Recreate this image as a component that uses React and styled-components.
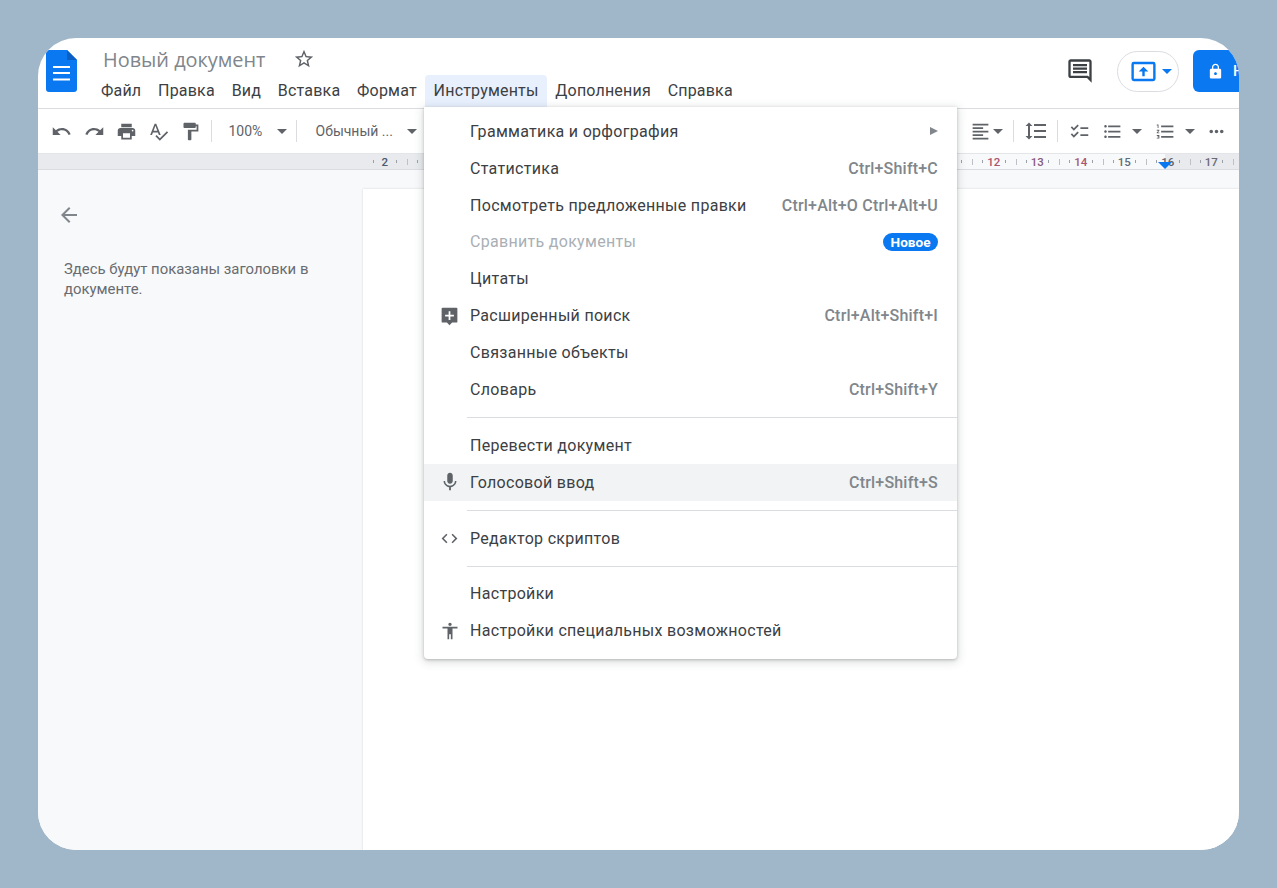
import React from 'react';
import styled, { createGlobalStyle } from 'styled-components';

const GlobalStyle = createGlobalStyle`
  html, body {
    margin: 0;
    padding: 0;
    background: #a0b7c9;
  }
  * {
    box-sizing: border-box;
  }
`;

const Stage = styled.div`
  width: 1277px;
  height: 888px;
  padding: 38px;
  background: #a0b7c9;
  font-family: Roboto, "Liberation Sans", sans-serif;
`;

const Frame = styled.div`
  position: relative;
  width: 1201px;
  height: 812px;
  display: flex;
  flex-direction: column;
  background: #fff;
  border-radius: 38px;
  overflow: hidden;
`;

const Header = styled.header`
  flex: none;
  height: 71px;
  display: flex;
  align-items: flex-start;
  border-bottom: 1px solid #dadce0;
  padding-left: 8px;
`;

const DocLogo = styled.svg`
  flex: none;
  width: 31px;
  height: 42px;
  margin-top: 12px;
`;

const TitleColumn = styled.div`
  margin-left: 24px;
  display: flex;
  flex-direction: column;
`;

const TitleRow = styled.div`
  display: flex;
  align-items: center;
  height: 24px;
  margin-top: 9px;
  margin-left: 2px;
`;

const DocTitle = styled.span`
  font-family: "Open Sans", Roboto, sans-serif;
  font-size: 19.9px;
  color: #80868b;
  width: 190px;
`;

const MenuBar = styled.nav`
  display: flex;
  margin-top: 4px;
`;

const MenuTab = styled.span`
  height: 32px;
  display: flex;
  align-items: center;
  padding: 0 8.4px 2px;
  font-size: 16px;
  letter-spacing: 0.19px;
  color: #3c4043;
  background: ${(p) => (p.$active ? '#e8f0fe' : 'transparent')};
  border-radius: 4px 4px 0 0;
  &:first-child {
    padding-left: 0;
  }
`;

const HeaderActions = styled.div`
  margin-left: auto;
  display: flex;
  align-items: center;
  height: 42px;
  margin-top: 12px;
`;

const ShareMove = styled.div`
  width: 62px;
  height: 41px;
  margin-left: 23px;
  border: 1px solid #dadce0;
  border-radius: 21px;
  display: flex;
  align-items: center;
  padding-left: 11px;
  gap: 4px;
`;

const Caret = styled.i`
  display: block;
  flex: none;
  width: 0;
  height: 0;
  margin-left: ${(p) => p.$gap || 0}px;
  border-left: 5px solid transparent;
  border-right: 5px solid transparent;
  border-top: 5px solid ${(p) => p.$color || '#5f6368'};
`;

const ShareButton = styled.div`
  width: 46px;
  height: 42px;
  margin-left: 14px;
  background: #0a78f0;
  border-radius: 6px 0 0 6px;
  display: flex;
  align-items: center;
  padding-left: 14px;
  gap: 9px;
  color: #fff;
  font-size: 15px;
  font-weight: 500;
  overflow: hidden;
`;

const Toolbar = styled.div`
  flex: none;
  height: 44px;
  display: flex;
  align-items: center;
  padding-left: 12.5px;
  padding-right: 12px;
`;

const ToolIcon = styled.svg`
  display: block;
  flex: none;
  width: ${(p) => p.$size || 21}px;
  height: ${(p) => p.$size || 21}px;
  fill: ${(p) => p.$color || '#5f6368'};
  margin-left: ${(p) => p.$gap || 0}px;
`;

const ToolDivider = styled.span`
  flex: none;
  width: 1px;
  height: 22px;
  background: #dadce0;
  margin: 0 ${(p) => p.$right ?? 10}px 0 ${(p) => p.$left ?? 10}px;
`;

const ToolText = styled.span`
  font-size: 14px;
  color: #5f6368;
  width: ${(p) => p.$width}px;
  white-space: nowrap;
`;

const ToolGroupRight = styled.div`
  margin-left: auto;
  display: flex;
  align-items: center;
`;

const Ruler = styled.div`
  flex: none;
  height: 17px;
  display: flex;
  align-items: center;
  padding-left: 325px;
  background: linear-gradient(
    to right,
    #e8eaed 0,
    #e8eaed 390px,
    #f8f9fa 390px,
    #f8f9fa 1127px,
    #e8eaed 1127px
  );
  border-top: 1px solid #e3e5e8;
  border-bottom: 1px solid #dadce0;
  overflow: hidden;
`;

const RulerCell = styled.span`
  position: relative;
  flex: none;
  width: 43.5px;
  height: 12px;
  line-height: 12px;
  text-align: center;
  font-size: 11.5px;
  font-weight: 500;
  color: ${(p) => p.$color || '#5f6368'};
  background:
    linear-gradient(#9aa0a6, #9aa0a6) 10px 50% / 1px 3px no-repeat,
    linear-gradient(#9aa0a6, #9aa0a6) calc(100% - 10px) 50% / 1px 3px no-repeat;
  &::before {
    content: '';
    position: absolute;
    right: -1px;
    top: 3px;
    width: 1px;
    height: 6px;
    background: #bdc1c6;
  }
`;

const RulerMarker = styled.i`
  position: absolute;
  left: 1120px;
  top: 124px;
  width: 0;
  height: 0;
  border-left: 7px solid transparent;
  border-right: 7px solid transparent;
  border-top: 7px solid #0a78f0;
`;

const Workspace = styled.div`
  flex: 1;
  display: flex;
  background: #f8f9fa;
  min-height: 0;
`;

const Outline = styled.aside`
  flex: none;
  width: 325px;
  padding: 33px 26px 0 19px;
`;

const BackIcon = styled.svg`
  display: block;
  width: 24px;
  height: 24px;
  fill: #80868b;
`;

const OutlineHint = styled.p`
  margin: 33px 0 0 7px;
  font-size: 14.9px;
  line-height: 19.5px;
  color: #686c71;
`;

const PageArea = styled.main`
  flex: 1;
  padding-top: 19px;
`;

const Page = styled.div`
  height: 100%;
  background: #fff;
  box-shadow: 0 0 2px rgba(60, 64, 67, 0.2);
`;

const Menu = styled.div`
  position: absolute;
  left: 386px;
  top: 69px;
  width: 533px;
  padding: 6px 0 9.5px;
  background: #fff;
  border-radius: 0 0 4px 4px;
  box-shadow: 0 1px 3px rgba(60, 64, 67, 0.3), 0 2px 8px 2px rgba(60, 64, 67, 0.15);
`;

const MenuRow = styled.div`
  height: 36.85px;
  display: flex;
  align-items: center;
  padding: 0 19px 0 15.5px;
  background: ${(p) => (p.$hover ? '#f1f3f4' : 'transparent')};
`;

const RowIconSlot = styled.span`
  flex: none;
  width: 30.5px;
  display: flex;
  align-items: center;
`;

const RowIconBox = styled.span`
  width: 20px;
  display: flex;
  justify-content: center;
`;

const RowLabel = styled.span`
  font-size: 16px;
  letter-spacing: 0.3px;
  color: ${(p) => (p.$disabled ? '#a9afb5' : '#3c4043')};
`;

const Shortcut = styled.span`
  margin-left: auto;
  font-size: 16px;
  letter-spacing: 0.2px;
  font-weight: 500;
  color: #80868b;
`;

const SubmenuArrow = styled.i`
  margin-left: auto;
  width: 0;
  height: 0;
  border-top: 4px solid transparent;
  border-bottom: 4px solid transparent;
  border-left: 8px solid #80868b;
`;

const NewBadge = styled.span`
  margin-left: auto;
  height: 18px;
  padding: 0 7.5px;
  display: flex;
  align-items: center;
  border-radius: 9px;
  background: #0a78f0;
  color: #fff;
  font-size: 13.6px;
  font-weight: 700;
`;

const MenuSeparator = styled.div`
  height: 1px;
  margin: 9.7px 0 8.4px 43px;
  background: #dadce0;
`;

const paths = {
  undo: 'M12.5 8c-2.65 0-5.05.99-6.9 2.6L2 7v9h9l-3.62-3.62c1.39-1.16 3.16-1.88 5.12-1.88 3.54 0 6.55 2.31 7.6 5.5l2.37-.78C21.08 11.03 17.15 8 12.5 8z',
  redo: 'M18.4 10.6C16.55 8.99 14.15 8 11.5 8c-4.65 0-8.58 3.03-9.96 7.22L3.9 16c1.05-3.19 4.05-5.5 7.6-5.5 1.95 0 3.73.72 5.12 1.88L13 16h9V7l-3.6 3.6z',
  print: 'M19 8H5c-1.66 0-3 1.34-3 3v6h4v4h12v-4h4v-6c0-1.66-1.34-3-3-3zm-3 11H8v-5h8v5zm3-7c-.55 0-1-.45-1-1s.45-1 1-1 1 .45 1 1-.45 1-1 1zm-1-9H6v4h12V3z',
  spell: 'M12.45 16h2.09L9.43 3H7.57L2.46 16h2.09l1.12-3h5.64l1.14 3zm-6.02-5L8.5 5.48 10.57 11H6.43zm15.16.59l-8.09 8.09L9.83 16l-1.41 1.41 5.09 5.09L23 13l-1.41-1.41z',
  paint: 'M18 4V3c0-.55-.45-1-1-1H5c-.55 0-1 .45-1 1v4c0 .55.45 1 1 1h12c.55 0 1-.45 1-1V6h1v4H9v11c0 .55.45 1 1 1h2c.55 0 1-.45 1-1v-9h8V4h-3z',
  star: 'M22 9.24l-7.19-.62L12 2 9.19 8.63 2 9.24l5.46 4.73L5.82 21 12 17.27 18.18 21l-1.63-7.03L22 9.24zM12 15.4l-3.76 2.27 1-4.28-3.32-2.88 4.38-.38L12 6.1l1.71 4.04 4.38.38-3.32 2.88 1 4.28L12 15.4z',
  chat: 'M21.99 4c0-1.1-.89-2-1.99-2H4c-1.1 0-2 .9-2 2v12c0 1.1.9 2 2 2h14l4 4-.01-18zM20 4v13.17L18.83 16H4V4h16zM6 12h12v2H6zm0-3h12v2H6zm0-3h12v2H6z',
  align: 'M15 15H3v2h12v-2zm0-8H3v2h12V7zM3 13h18v-2H3v2zm0 8h18v-2H3v2zM3 3v2h18V3H3z',
  spacing: 'M6 7h2.5L5 3.5 1.5 7H4v10H1.5L5 20.5 8.5 17H6V7zm4-2v2h12V5H10zm0 14h12v-2H10v2zm0-6h12v-2H10v2z',
  checklist: 'M22 7h-9v2h9V7zm0 8h-9v2h9v-2zM5.54 11 2 7.46l1.41-1.41 2.12 2.12 4.24-4.24 1.41 1.41L5.54 11zm0 8L2 15.46l1.41-1.41 2.12 2.12 4.24-4.24 1.41 1.41L5.54 19z',
  bullets: 'M4 10.5c-.83 0-1.5.67-1.5 1.5s.67 1.5 1.5 1.5 1.5-.67 1.5-1.5-.67-1.5-1.5-1.5zm0-6c-.83 0-1.5.67-1.5 1.5S3.17 7.5 4 7.5 5.5 6.83 5.5 6 4.83 4.5 4 4.5zm0 12c-.83 0-1.5.68-1.5 1.5s.68 1.5 1.5 1.5 1.5-.68 1.5-1.5-.67-1.5-1.5-1.5zM7 19h14v-2H7v2zm0-6h14v-2H7v2zm0-8v2h14V5H7z',
  numbered: 'M2 17h2v.5H3v1h1v.5H2v1h3v-4H2v1zm1-9h1V4H2v1h1v3zm-1 3h1.8L2 13.1v.9h3v-1H3.2L5 10.9V10H2v1zm5-6v2h14V5H7zm0 14h14v-2H7v2zm0-6h14v-2H7v2z',
  more: 'M6 10c-1.1 0-2 .9-2 2s.9 2 2 2 2-.9 2-2-.9-2-2-2zm12 0c-1.1 0-2 .9-2 2s.9 2 2 2 2-.9 2-2-.9-2-2-2zm-6 0c-1.1 0-2 .9-2 2s.9 2 2 2 2-.9 2-2-.9-2-2-2z',
  mic: 'M12 14c1.66 0 2.99-1.34 2.99-3L15 5c0-1.66-1.34-3-3-3S9 3.34 9 5v6c0 1.66 1.34 3 3 3zm5.3-3c0 3-2.54 5.1-5.3 5.1S6.7 14 6.7 11H5c0 3.41 2.72 6.23 6 6.72V21h2v-3.28c3.28-.48 6-3.3 6-6.72h-1.7z',
  code: 'M9.4 16.6L4.8 12l4.6-4.6L8 6l-6 6 6 6 1.4-1.4zm5.2 0l4.6-4.6-4.6-4.6L16 6l6 6-6 6-1.4-1.4z',
  person: 'M12 2c1.1 0 2 .9 2 2s-.9 2-2 2-2-.9-2-2 .9-2 2-2zm9 7h-6v13h-2v-6h-2v6H9V9H3V7h18v2z',
  explore: 'M4 3h16a1 1 0 0 1 1 1v15a1 1 0 0 1-1 1h-5l-3 3-3-3H4a1 1 0 0 1-1-1V4a1 1 0 0 1 1-1zm7 4v4H7v2h4v4h2v-4h4v-2h-4V7h-2z',
  back: 'M20 11H7.83l5.59-5.59L12 4l-8 8 8 8 1.41-1.41L7.83 13H20v-2z',
  lock: 'M18 8h-1V6c0-2.76-2.24-5-5-5S7 3.24 7 6v2H6c-1.1 0-2 .9-2 2v10c0 1.1.9 2 2 2h12c1.1 0 2-.9 2-2V10c0-1.1-.9-2-2-2zm-6 9c-1.1 0-2-.9-2-2s.9-2 2-2 2 .9 2 2-.9 2-2 2zm3.1-9H8.9V6c0-1.71 1.39-3.1 3.1-3.1 1.71 0 3.1 1.39 3.1 3.1v2z',
  moveUp: 'M4 4h16a2 2 0 0 1 2 2v12a2 2 0 0 1-2 2H4a2 2 0 0 1-2-2V6a2 2 0 0 1 2-2zm0 2v12h16V6H4zm8 2 4 4h-3v4h-2v-4H8l4-4z',
};

const Icon = ({ name, ...rest }) => (
  <ToolIcon viewBox="0 0 24 24" {...rest}>
    <path d={paths[name]} fillRule="evenodd" />
  </ToolIcon>
);

const tabs = ['Файл', 'Правка', 'Вид', 'Вставка', 'Формат', 'Инструменты', 'Дополнения', 'Справка'];

// only the numbers that stick out from under the open menu have a label
const rulerLabels = {
  0: { text: '2', color: '#4a5a70' },
  14: { text: '12', color: '#a8566e' },
  15: { text: '13', color: '#8a5a80' },
  16: { text: '14', color: '#a8566e' },
  17: { text: '15', color: '#5f6b78' },
  18: { text: '16', color: '#5f6368' },
  19: { text: '17', color: '#6b6875' },
};
const rulerCells = Array.from({ length: 20 }, (_, i) => rulerLabels[i] || { text: '' });

const menuGroups = [
  [
    { label: 'Грамматика и орфография', arrow: true },
    { label: 'Статистика', keys: 'Ctrl+Shift+C' },
    { label: 'Посмотреть предложенные правки', keys: 'Ctrl+Alt+O Ctrl+Alt+U' },
    { label: 'Сравнить документы', disabled: true, badge: 'Новое' },
    { label: 'Цитаты' },
    { label: 'Расширенный поиск', keys: 'Ctrl+Alt+Shift+I', icon: 'explore', size: 21 },
    { label: 'Связанные объекты' },
    { label: 'Словарь', keys: 'Ctrl+Shift+Y' },
  ],
  [
    { label: 'Перевести документ' },
    { label: 'Голосовой ввод', keys: 'Ctrl+Shift+S', icon: 'mic', size: 22, hover: true },
  ],
  [{ label: 'Редактор скриптов', icon: 'code', size: 19 }],
  [
    { label: 'Настройки' },
    { label: 'Настройки специальных возможностей', icon: 'person', size: 20 },
  ],
];

export default function App() {
  return (
    <Stage>
      <GlobalStyle />
      <Frame>
        <Header>
          <DocLogo viewBox="0 0 31 42">
            <path d="M3 0h18l10 10v29a3 3 0 0 1-3 3H3a3 3 0 0 1-3-3V3a3 3 0 0 1 3-3z" fill="#0a78f0" />
            <path d="M21 0l10 10H21z" fill="#0a5fc4" />
            <path d="M7 16h17v2H7zM7 22h17v2H7zM7 28.5h17v2H7z" fill="#fff" />
          </DocLogo>
          <TitleColumn>
            <TitleRow>
              <DocTitle>Новый документ</DocTitle>
              <Icon name="star" $size={22} />
            </TitleRow>
            <MenuBar>
              {tabs.map((tab) => (
                <MenuTab key={tab} $active={tab === 'Инструменты'}>{tab}</MenuTab>
              ))}
            </MenuBar>
          </TitleColumn>
          <HeaderActions>
            <Icon name="chat" $size={28} $color="#3c4043" />
            <ShareMove>
              <Icon name="moveUp" $size={29} $color="#0a78f0" />
              <Caret $color="#0a78f0" />
            </ShareMove>
            <ShareButton>
              <Icon name="lock" $size={17} $color="#fff" />
              Настройки
            </ShareButton>
          </HeaderActions>
        </Header>

        <Toolbar>
          <Icon name="undo" />
          <Icon name="redo" $gap={12} />
          <Icon name="print" $gap={11} />
          <Icon name="spell" $gap={11} />
          <Icon name="paint" $gap={11} />
          <ToolDivider $left={10} $right={17} />
          <ToolText $width={48}>100%</ToolText>
          <Caret />
          <ToolDivider $left={9} $right={19} />
          <ToolText $width={91}>Обычный ...</ToolText>
          <Caret />
          <ToolGroupRight>
            <Icon name="align" $size={21} />
            <Caret $gap={2} />
            <ToolDivider $left={10} $right={10} />
            <Icon name="spacing" $size={24} />
            <ToolDivider $left={9} $right={11} />
            <Icon name="checklist" />
            <Icon name="bullets" $gap={12} />
            <Caret $gap={9} />
            <Icon name="numbered" $gap={13} />
            <Caret $gap={9} />
            <Icon name="more" $gap={11} />
          </ToolGroupRight>
        </Toolbar>

        <Ruler>
          {rulerCells.map((cell, i) => (
            <RulerCell key={i} $color={cell.color}>{cell.text}</RulerCell>
          ))}
        </Ruler>

        <Workspace>
          <Outline>
            <BackIcon viewBox="0 0 24 24"><path d={paths.back} /></BackIcon>
            <OutlineHint>Здесь будут показаны заголовки в документе.</OutlineHint>
          </Outline>
          <PageArea>
            <Page />
          </PageArea>
        </Workspace>

        <RulerMarker />

        <Menu>
          {menuGroups.map((group, g) => (
            <React.Fragment key={g}>
              {g > 0 && <MenuSeparator />}
              {group.map((row) => (
                <MenuRow key={row.label} $hover={row.hover}>
                  <RowIconSlot>
                    {row.icon && (
                      <RowIconBox>
                        <Icon name={row.icon} $size={row.size} />
                      </RowIconBox>
                    )}
                  </RowIconSlot>
                  <RowLabel $disabled={row.disabled}>{row.label}</RowLabel>
                  {row.keys && <Shortcut>{row.keys}</Shortcut>}
                  {row.arrow && <SubmenuArrow />}
                  {row.badge && <NewBadge>{row.badge}</NewBadge>}
                </MenuRow>
              ))}
            </React.Fragment>
          ))}
        </Menu>
      </Frame>
    </Stage>
  );
}
